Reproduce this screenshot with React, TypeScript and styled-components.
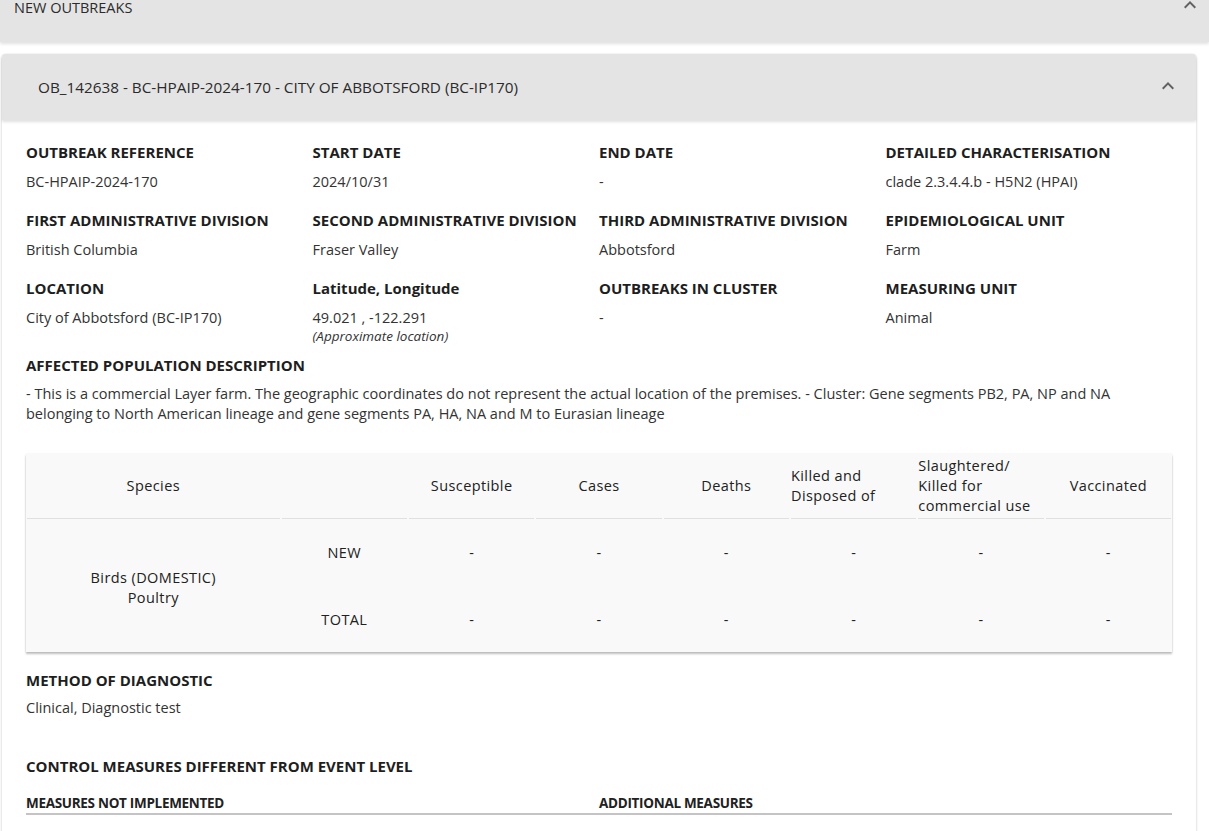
import React from "react";
import styled, { createGlobalStyle } from "styled-components";

const GlobalStyle = createGlobalStyle`
  html, body {
    margin: 0;
    padding: 0;
    background: #ffffff;
  }
  body {
    font-family: "Open Sans", "Noto Sans", sans-serif;
    color: #212121;
  }
  * { box-sizing: border-box; }
`;

const fields = [
  { label: "OUTBREAK REFERENCE", value: "BC-HPAIP-2024-170" },
  { label: "START DATE", value: "2024/10/31" },
  { label: "END DATE", value: "-" },
  { label: "DETAILED CHARACTERISATION", value: "clade 2.3.4.4.b - H5N2 (HPAI)" },
  { label: "FIRST ADMINISTRATIVE DIVISION", value: "British Columbia" },
  { label: "SECOND ADMINISTRATIVE DIVISION", value: "Fraser Valley" },
  { label: "THIRD ADMINISTRATIVE DIVISION", value: "Abbotsford" },
  { label: "EPIDEMIOLOGICAL UNIT", value: "Farm" },
  { label: "LOCATION", value: "City of Abbotsford (BC-IP170)" },
  { label: "Latitude, Longitude", value: "49.021 , -122.291", note: "(Approximate location)" },
  { label: "OUTBREAKS IN CLUSTER", value: "-" },
  { label: "MEASURING UNIT", value: "Animal" },
];

// header titles, one entry per line as they wrap in the column
const columns = [
  ["Susceptible"],
  ["Cases"],
  ["Deaths"],
  ["Killed and", "Disposed of"],
  ["Slaughtered/", "Killed for", "commercial use"],
  ["Vaccinated"],
];

const rows = ["NEW", "TOTAL"];

function Chevron() {
  return (
    <svg width="12" height="8" viewBox="0 0 12 8">
      <path d="M1.4 7.4 L6 2.8 L10.6 7.4 L12 6 L6 0 L0 6 Z" fill="#616161" />
    </svg>
  );
}

export default function App() {
  return (
    <>
      <GlobalStyle />
      <Page>
        <TopBar>
          <span>NEW OUTBREAKS</span>
          <ChevronBox $top={1}>
            <Chevron />
          </ChevronBox>
        </TopBar>

        <Panel>
          <PanelHeader>
            <span>OB_142638 - BC-HPAIP-2024-170 - CITY OF ABBOTSFORD (BC-IP170)</span>
            <ChevronBox $top={-3}>
              <Chevron />
            </ChevronBox>
          </PanelHeader>

          <PanelBody>
            <FieldGrid>
              {fields.map((f) => (
                <Field key={f.label}>
                  <Label>{f.label}</Label>
                  <Value>{f.value}</Value>
                  {f.note && <Note>{f.note}</Note>}
                </Field>
              ))}
            </FieldGrid>

            <Section $top={10}>
              <Label>AFFECTED POPULATION DESCRIPTION</Label>
              <Description>
                - This is a commercial Layer farm. The geographic coordinates do not represent the actual
                location of the premises. - Cluster: Gene segments PB2, PA, NP and NA belonging to North
                American lineage and gene segments PA, HA, NA and M to Eurasian lineage
              </Description>
            </Section>

            <Table>
              <HeadCell $span={2}>
                <span>Species</span>
              </HeadCell>
              <HeadCell />
              {columns.map((lines) => (
                <HeadCell key={lines.join(" ")} $wrapped={lines.length > 1}>
                  <span>
                    {lines.map((l, i) => (
                      <React.Fragment key={l}>
                        {i > 0 && <br />}
                        {l}
                      </React.Fragment>
                    ))}
                  </span>
                </HeadCell>
              ))}

              <SpeciesCell>
                <span>Birds (DOMESTIC)</span>
                <span>Poultry</span>
              </SpeciesCell>
              {rows.map((r) => (
                <React.Fragment key={r}>
                  <RowLabel>{r}</RowLabel>
                  {columns.map((c) => (
                    <BodyCell key={c.join(" ")}>-</BodyCell>
                  ))}
                </React.Fragment>
              ))}
            </Table>

            <Section $top={18}>
              <Label>METHOD OF DIAGNOSTIC</Label>
              <Value $gap={8}>Clinical, Diagnostic test</Value>
            </Section>

            <Section $top={39}>
              <Label>CONTROL MEASURES DIFFERENT FROM EVENT LEVEL</Label>
              <MeasuresHead>
                <span>MEASURES NOT IMPLEMENTED</span>
                <span>ADDITIONAL MEASURES</span>
              </MeasuresHead>
            </Section>
          </PanelBody>
        </Panel>
      </Page>
    </>
  );
}

const Page = styled.div`
  width: 1209px;
  height: 831px;
  overflow: hidden;
  background: #ffffff;
`;

const TopBar = styled.div`
  height: 42px;
  background: #e4e4e4;
  display: flex;
  justify-content: space-between;
  align-items: flex-start;
  padding: 0 13px 0 14px;
  font-size: 14.5px;
  line-height: 15px;
  color: #2b2b2b;
  box-shadow: 0 2px 3px rgba(0, 0, 0, 0.12);
  position: relative;
  z-index: 1;
`;

const ChevronBox = styled.div<{ $top: number }>`
  display: flex;
  margin-top: ${(p) => p.$top}px;
`;

const Panel = styled.div`
  margin: 12px 13px 0 2px;
  border-radius: 4px;
  background: #ffffff;
  box-shadow: 0 1px 3px rgba(0, 0, 0, 0.2), 0 0 1px rgba(0, 0, 0, 0.15);
`;

const PanelHeader = styled.div`
  height: 66px;
  background: #e4e4e4;
  border-radius: 4px 4px 0 0;
  display: flex;
  align-items: center;
  justify-content: space-between;
  padding: 0 22px 0 36px;
  font-size: 15.3px;
  color: #2b2b2b;
  box-shadow: 0 2px 3px rgba(0, 0, 0, 0.12);
  position: relative;
`;

const PanelBody = styled.div`
  padding: 22px 24px 40px 24px;
`;

const FieldGrid = styled.div`
  display: grid;
  grid-template-columns: repeat(4, 1fr);
  row-gap: 10px;
`;

const Field = styled.div`
  display: flex;
  flex-direction: column;
  min-height: 58px;
`;

const Label = styled.div`
  font-size: 15px;
  font-weight: 700;
  line-height: 20px;
  color: #1e1e1e;
  white-space: nowrap;
`;

const Value = styled.div<{ $gap?: number }>`
  margin-top: ${(p) => p.$gap ?? 10}px;
  font-size: 14.5px;
  line-height: 19px;
  color: #333333;
`;

const Note = styled.div`
  font-size: 13.5px;
  font-style: italic;
  line-height: 18px;
  color: #333333;
`;

const Section = styled.div<{ $top?: number }>`
  margin-top: ${(p) => p.$top ?? 6}px;
`;

const Description = styled.p`
  margin: 9px 0 0;
  font-size: 14.5px;
  line-height: 20px;
  color: #333333;
`;

const Table = styled.div`
  margin-top: 30px;
  display: grid;
  grid-template-columns: repeat(9, 1fr);
  grid-template-rows: 65px 67px 66px;
  background: #f9f9f9;
  box-shadow: 0 2px 2px rgba(0, 0, 0, 0.25), 0 0 2px rgba(0, 0, 0, 0.08);
  font-size: 14.5px;
  letter-spacing: 0.4px;
  color: #212121;
`;

const HeadCell = styled.div<{ $span?: number; $wrapped?: boolean }>`
  grid-column: span ${(p) => p.$span ?? 1};
  display: flex;
  align-items: center;
  justify-content: center;
  line-height: 20px;
  margin: 0 1px;
  border-bottom: 1px solid #e0e0e0;

  span {
    width: ${(p) => (p.$wrapped ? "100%" : "auto")};
  }
`;

const SpeciesCell = styled.div`
  grid-column: 1 / span 2;
  grid-row: 2 / span 2;
  display: flex;
  flex-direction: column;
  align-items: center;
  justify-content: center;
  line-height: 20px;
  padding-top: 4px;
`;

const RowLabel = styled.div`
  grid-column: 3;
  display: flex;
  align-items: center;
  justify-content: center;
  font-weight: 500;
`;

const BodyCell = styled.div`
  display: flex;
  align-items: center;
  justify-content: center;
`;

const MeasuresHead = styled.div`
  margin-top: 18px;
  display: grid;
  grid-template-columns: 1fr 1fr;
  padding-bottom: 1px;
  border-bottom: 2px solid #c4c4c4;
  font-size: 13.5px;
  font-weight: 700;
  letter-spacing: -0.3px;
  color: #212121;
`;
